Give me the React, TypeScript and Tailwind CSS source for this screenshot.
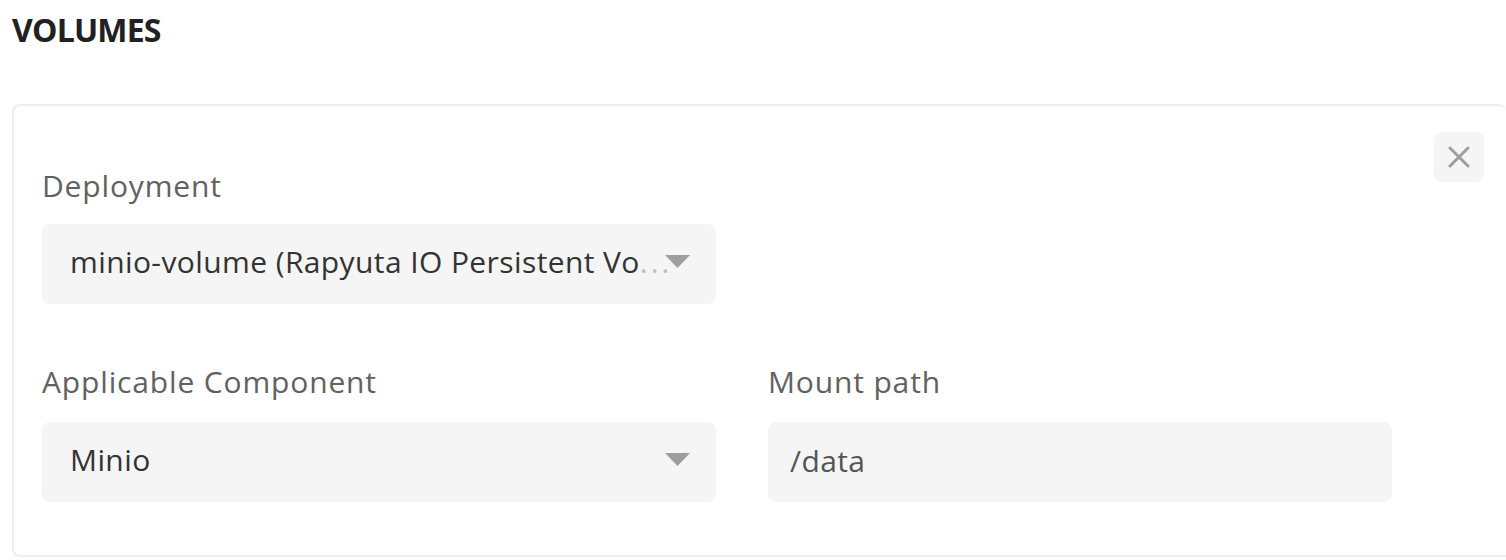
import { useState } from "react";

const font = { fontFamily: '"Open Sans", "Noto Sans", sans-serif' };

const Arrow = () => (
  <svg width="25" height="13" viewBox="0 0 25 13" className="shrink-0">
    <path d="M0 0 L25 0 L12.5 13 Z" fill="#9e9e9e" />
  </svg>
);

const SelectBox = ({ value, faded }: { value: string; faded?: string }) => (
  <div className="relative flex items-center h-[80px] w-[674px] rounded-lg bg-[#f5f5f5] pl-[28px] pr-[26px] pb-[6px]">
    <div className="flex-1 overflow-hidden whitespace-nowrap text-[30px] tracking-[0.4px] text-[#333333]">
      {value}
      {faded && <span className="tracking-[3px] text-[#bdbdbd]">{faded}</span>}
    </div>
    <div className="absolute right-[26px] top-1/2 -translate-y-[9px]">
      <Arrow />
    </div>
  </div>
);

export default function App() {
  const [mountPath, setMountPath] = useState("/data");

  return (
    <div className="w-[1506px] h-[560px] bg-white overflow-hidden" style={font}>
      <h2 className="pl-3 pt-[10px] text-[32px] leading-[40px] font-bold tracking-[-0.8px] text-[#212121]">
        VOLUMES
      </h2>

      <div className="relative ml-3 mt-[54px] h-[453px] rounded-l-lg rounded-tr-lg border-2 border-r-0 border-[#eeeeee] pl-[28px] pt-[62px]">
        <button className="absolute right-[22px] top-[26px] flex h-[50px] w-[50px] items-center justify-center rounded-lg bg-[#f5f5f5]">
          <svg width="22" height="22" viewBox="0 0 22 22">
            <path d="M2 2 L20 20 M20 2 L2 20" stroke="#9e9e9e" strokeWidth="3" strokeLinecap="round" />
          </svg>
        </button>

        <label className="block text-[30px] leading-[36px] tracking-[0.85px] text-[#616161]">Deployment</label>
        <div className="mt-[20px]">
          <SelectBox value="minio-volume (Rapyuta IO Persistent Vo" faded="..." />
        </div>

        <div className="mt-[60px] flex gap-[52px]">
          <div>
            <label className="block text-[30px] leading-[36px] tracking-[0.85px] text-[#616161]">Applicable Component</label>
            <div className="mt-[22px]">
              <SelectBox value="Minio" />
            </div>
          </div>
          <div>
            <label className="block text-[30px] leading-[36px] tracking-[0.85px] text-[#616161]">Mount path</label>
            <div className="mt-[22px]">
              <input
                value={mountPath}
                onChange={(e) => setMountPath(e.target.value)}
                className="h-[80px] w-[624px] rounded-lg bg-[#f5f5f5] px-[22px] pb-[4px] text-[30px] tracking-[0.4px] text-[#555555] outline-none"
                style={font}
              />
            </div>
          </div>
        </div>
      </div>
    </div>
  );
}
